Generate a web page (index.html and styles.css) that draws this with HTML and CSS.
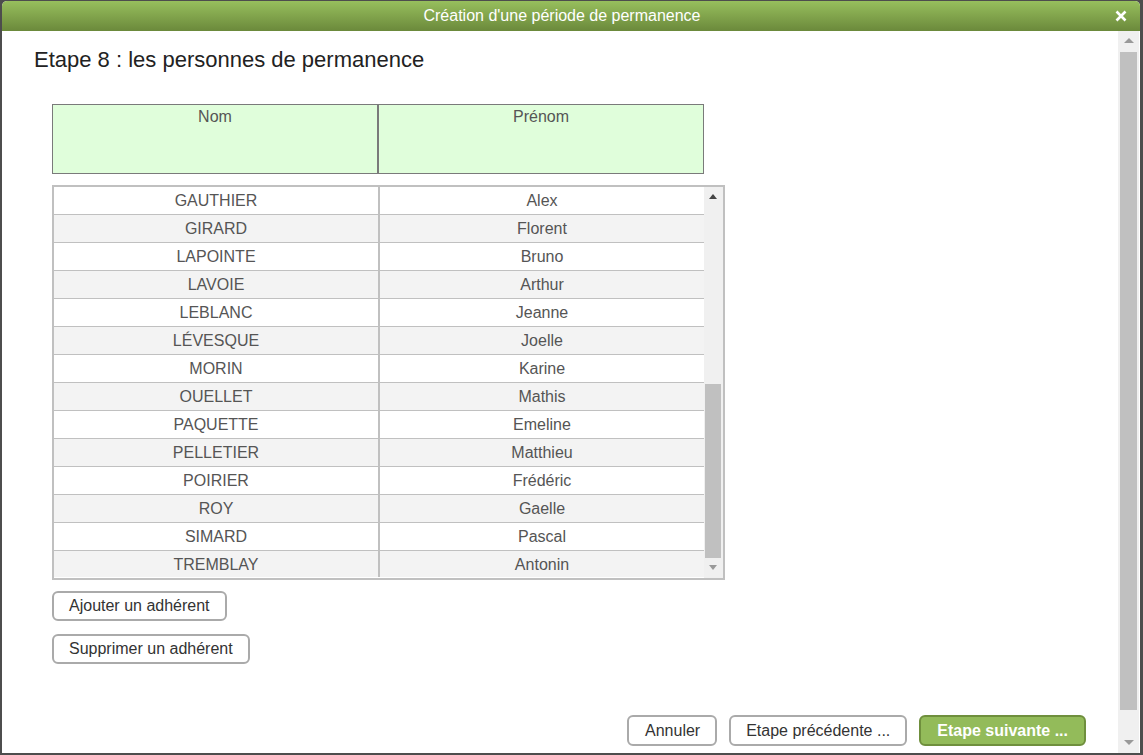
FILE: index.html
```html
<!DOCTYPE html>
<html lang="fr">
<head>
  <meta charset="UTF-8" />
  <title>Création d'une période de permanence</title>
  <link rel="stylesheet" href="styles.css">
</head>
<body>
  <div class="dialog">
    <div class="titlebar">
      <span class="title">Création d'une période de permanence</span>
      <svg class="close" width="12" height="12" viewBox="0 0 12 12">
        <path d="M1.5 1.5 L10.5 10.5 M10.5 1.5 L1.5 10.5" stroke="#fff" stroke-width="2.6" />
      </svg>
    </div>
    <div class="frame">
      <div class="content">
        <h1>Etape 8 : les personnes de permanence</h1>

        <div class="head-table">
          <div class="head-cell">Nom</div>
          <div class="head-cell">Prénom</div>
        </div>

        <div class="list">
          <div class="rows" id="rows"></div>
          <div class="scroll small">
            <div class="arrow up dark"></div>
            <div class="track">
              <div class="gap" style="height:177px"></div>
              <div class="thumb" style="height:174px"></div>
            </div>
            <div class="arrow down"></div>
          </div>
        </div>

        <button class="btn">Ajouter un adhérent</button>
        <button class="btn">Supprimer un adhérent</button>

        <div class="footer">
          <button class="btn cancel">Annuler</button>
          <button class="btn">Etape précédente ...</button>
          <button class="btn primary">Etape suivante ...</button>
        </div>
      </div>
      <div class="scroll big">
        <div class="arrow up"></div>
        <div class="track">
          <div class="gap" style="height:1px"></div>
          <div class="thumb" style="height:658px"></div>
        </div>
        <div class="arrow down"></div>
      </div>
    </div>
  </div>

  <script>
    const people = [
      ["GAUTHIER", "Alex"], ["GIRARD", "Florent"], ["LAPOINTE", "Bruno"],
      ["LAVOIE", "Arthur"], ["LEBLANC", "Jeanne"], ["LÉVESQUE", "Joelle"],
      ["MORIN", "Karine"], ["OUELLET", "Mathis"], ["PAQUETTE", "Emeline"],
      ["PELLETIER", "Matthieu"], ["POIRIER", "Frédéric"], ["ROY", "Gaelle"],
      ["SIMARD", "Pascal"], ["TREMBLAY", "Antonin"]
    ];
    const rows = document.getElementById("rows");
    people.forEach(([nom, prenom]) => {
      const row = document.createElement("div");
      row.className = "row";
      row.innerHTML = `<div class="cell">${nom}</div><div class="cell">${prenom}</div>`;
      rows.appendChild(row);
    });
  </script>
</body>
</html>
```

FILE: styles.css
```css
* {
  box-sizing: border-box;
}

body {
  margin: 0;
  padding: 1px 3px 2px 2px;
  height: 755px;
  background: #4d4d4d;
  font-family: Arial, 'Liberation Sans', sans-serif;
  overflow: hidden;
}

.dialog {
  height: 752px;
  background: #fff;
  border-radius: 5px 5px 0 0;
  display: flex;
  flex-direction: column;
  overflow: hidden;
}

.titlebar {
  height: 30px;
  flex-shrink: 0;
  background: linear-gradient(#97bf5d, #6b893b);
  display: flex;
  align-items: center;
  justify-content: center;
  position: relative;
  padding-right: 18px;
}

.title {
  color: #fff;
  font-size: 16px;
}

.close {
  position: absolute;
  right: 13px;
  top: 9px;
}

.frame {
  flex: 1;
  display: flex;
  min-height: 0;
}

.content {
  flex: 1;
  display: flex;
  flex-direction: column;
  align-items: flex-start;
  padding: 16px 32px 7px 50px;
}

h1 {
  margin: 0 0 32px -18px;
  font-size: 22px;
  font-weight: normal;
  color: #222;
  line-height: 25px;
}

.head-table {
  width: 652px;
  height: 70px;
  display: flex;
  background: #e0fedb;
  border: 1px solid #7a7a7a;
}

.head-cell {
  flex: 1;
  text-align: center;
  color: #555;
  font-size: 16px;
  padding-top: 3px;
}

.head-cell:first-child {
  flex: 0 0 324px;
}

.head-cell + .head-cell {
  border-left: 2px solid #7a7a7a;
}

.list {
  margin-top: 11px;
  width: 673px;
  display: flex;
  border: 2px solid #c0c0c0;
}

.rows {
  flex: 1;
}

.row {
  display: flex;
  height: 28px;
  border-bottom: 1px solid #c0c0c0;
}

.row:last-child {
  border-bottom: none;
  height: 26px;
}

.row:nth-child(even) {
  background: #f3f3f3;
}

.cell {
  flex: 1;
  text-align: center;
  font-size: 16px;
  color: #555;
  line-height: 27px;
}

.cell:first-child {
  flex: 0 0 324px;
}

.cell + .cell {
  border-left: 2px solid #c0c0c0;
}

.scroll {
  display: flex;
  flex-direction: column;
  background: #f0f0f0;
  flex-shrink: 0;
}

.scroll.small {
  width: 19px;
  padding: 0 2px 0 1px;
}

.scroll.big {
  width: 21px;
  margin-right: 1px;
  padding: 0 2px;
}

.track {
  flex: 1;
}

.thumb {
  background: #c0c0c0;
}

.arrow {
  height: 20px;
  position: relative;
}

.arrow::after {
  content: "";
  position: absolute;
  left: 50%;
  top: 50%;
  margin-left: -5px;
  margin-top: -3px;
  border-left: 5px solid transparent;
  border-right: 5px solid transparent;
}

.small .arrow::after {
  margin-left: -4px;
  border-left-width: 4px;
  border-right-width: 4px;
}

.arrow.up::after {
  border-bottom: 5px solid #999;
}

.arrow.down::after {
  border-top: 5px solid #999;
}

.arrow.up.dark::after {
  border-bottom-color: #444;
}

.btn {
  font-family: Arial, 'Liberation Sans', sans-serif;
  font-size: 16px;
  color: #333;
  background: #fff;
  border: 2px solid #aaa;
  border-radius: 6px;
  height: 30px;
  padding: 0 15px;
  margin-top: 11px;
  cursor: pointer;
}

.btn + .btn {
  margin-top: 13px;
}

.footer {
  margin-top: auto;
  align-self: flex-end;
  display: flex;
  gap: 12px;
}

.footer .btn {
  margin: 0;
  height: 31px;
}

.footer .cancel {
  padding: 0 15px 0 16px;
}

.btn.primary {
  background: #93bb5a;
  border-color: #6f8f3d;
  color: #fff;
  font-weight: bold;
  padding: 0 16px;
}
```
